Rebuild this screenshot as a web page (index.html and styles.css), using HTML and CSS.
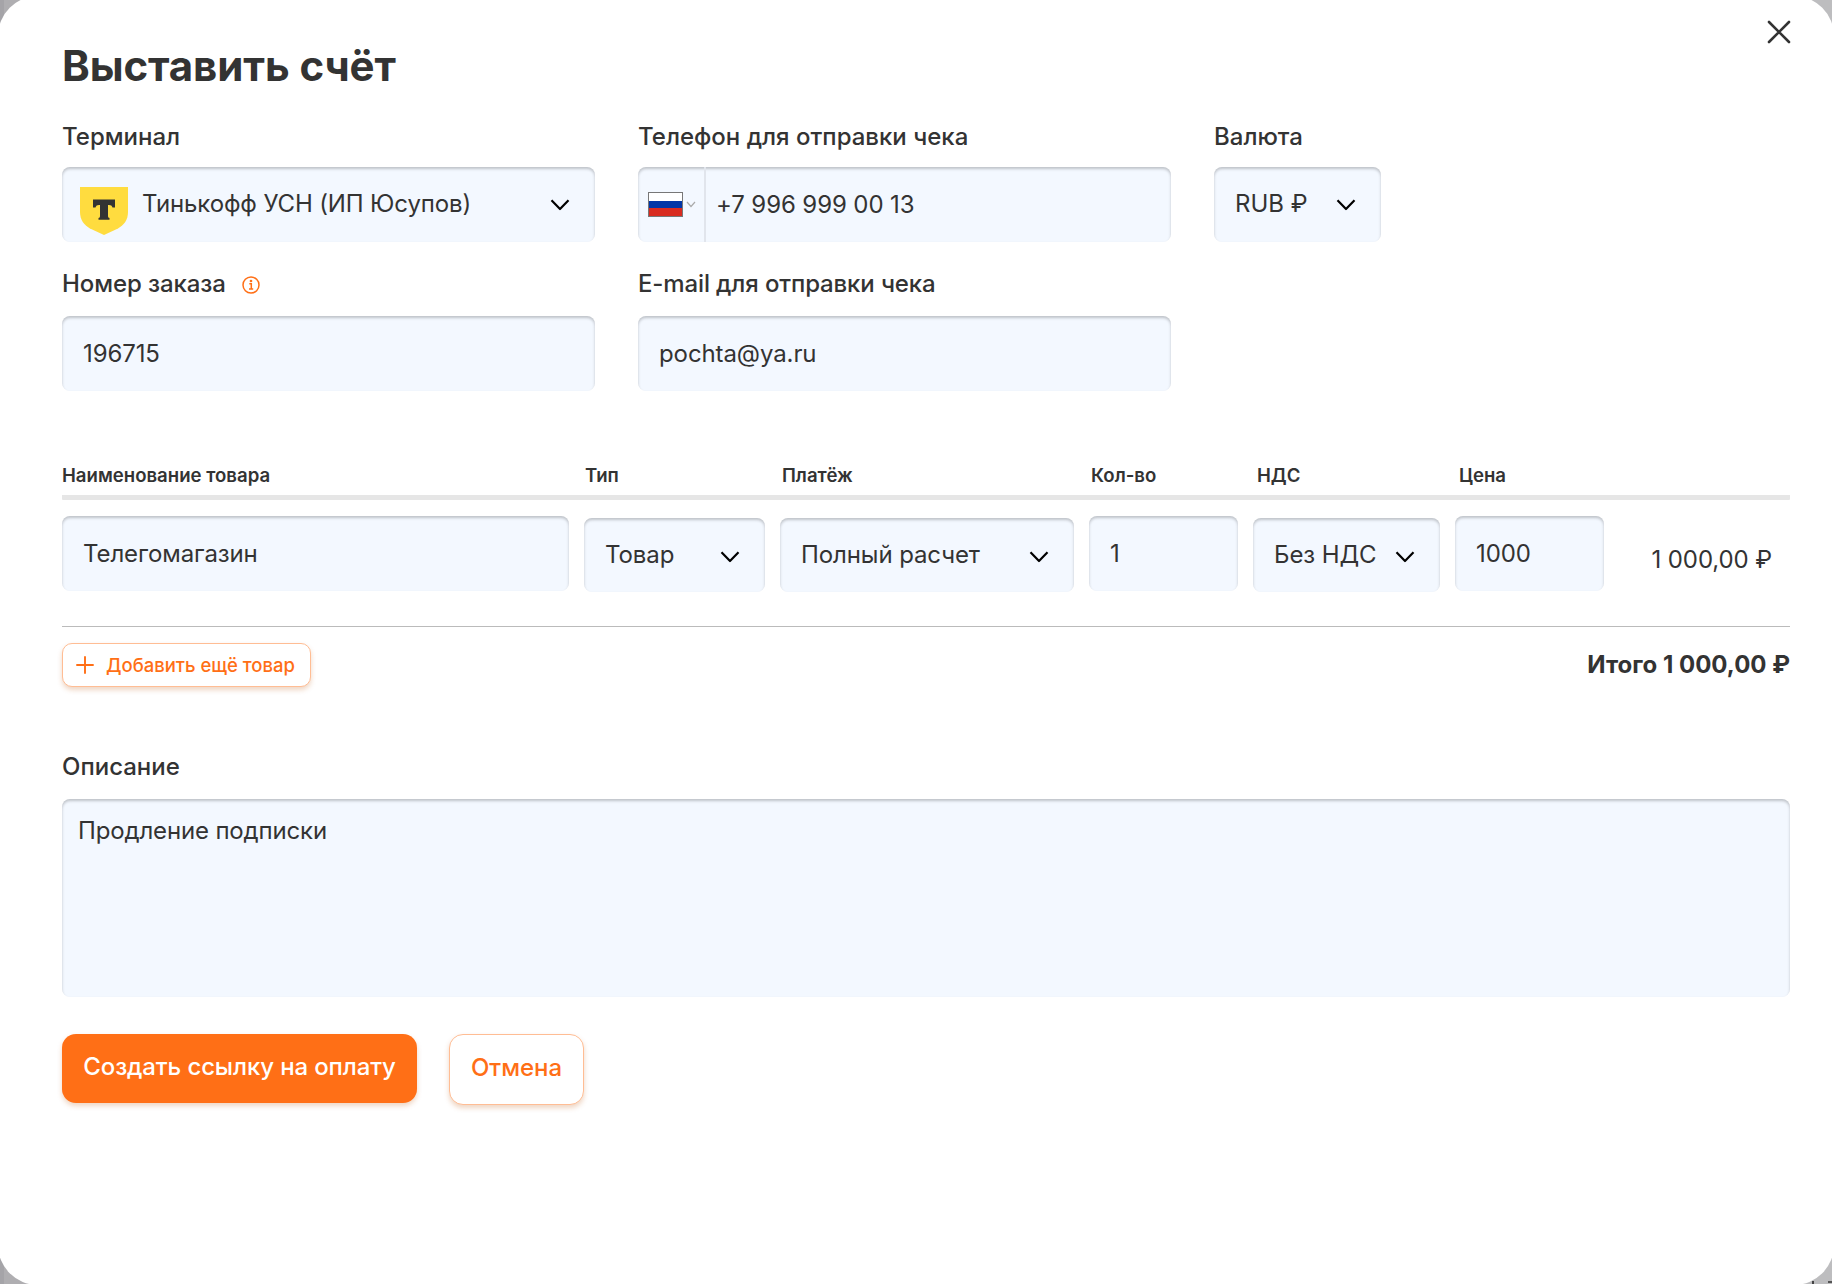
FILE: index.html
```
<!DOCTYPE html>
<html lang="ru">
<head>
<meta charset="utf-8">
<title>Выставить счёт</title>
<link rel="stylesheet" href="styles.css">
</head>
<body>
<svg class="defs" width="0" height="0"><symbol id="chev" viewBox="0 0 20 14"><path d="M1.500 2.200 10 11l8.500-8.800" fill="none" stroke="#000" stroke-width="2.200" stroke-linejoin="round"/></symbol></svg>
<main class="modal">
  <button class="close" aria-label="Закрыть"><svg width="24" height="24" viewBox="0 0 24 24"><path d="M2 2l20 20M22 2L2 22" stroke="#333" stroke-width="2.600" stroke-linecap="round"/></svg></button>
  <h1 class="title">Выставить счёт</h1>
  <section class="fields">
    <div class="group">
      <label class="label">Терминал</label>
      <div class="field terminal">
        <svg class="bank" width="48" height="48" viewBox="0 0 48 48"><path d="M0 0h48v25c0 8-4 13-10 16.500L24 48 10 41.500C4 38 0 33 0 25z" fill="#ffdc3f"/><path d="M13 12.500h22v8h-2.500c-.5-1.700-1.500-2.500-3.500-2.500h-1v11c0 1.300.5 1.800 1.500 2v1.800h-11v-1.800c1-.2 1.500-.7 1.500-2v-11h-1c-2 0-3 .8-3.500 2.500H13z" fill="#333"/></svg>
        <span class="grow">Тинькофф УСН (ИП Юсупов)</span>
        <svg class="chev"><use href="#chev"/></svg>
      </div>
    </div>
    <div class="group">
      <label class="label">Телефон для отправки чека</label>
      <div class="field phone">
        <span class="country"><span class="flag"></span><svg width="10" height="7" viewBox="0 0 10 7"><path d="M1 1l4 4.500L9 1" fill="none" stroke="#aaa" stroke-width="1.200"/></svg></span>
        <span class="number">+7 996 999 00 13</span>
      </div>
    </div>
    <div class="group">
      <label class="label">Валюта</label>
      <div class="field"><span class="grow currency">RUB ₽</span><svg class="chev"><use href="#chev"/></svg></div>
    </div>
    <div class="group second">
      <label class="label">Номер заказа <svg class="info" width="18" height="18" viewBox="0 0 18 18" fill="none" stroke="#ff6f16" stroke-width="1.500"><circle cx="9" cy="9" r="8"/><path d="M7.300 7.700h2v5M7 12.900h4.200"/><circle cx="9" cy="5" r=".6"/></svg></label>
      <div class="field">196715</div>
    </div>
    <div class="group second">
      <label class="label email">E-mail для отправки чека</label>
      <div class="field">pochta@ya.ru</div>
    </div>
  </section>
  <section class="goods">
    <div class="row head"><span>Наименование товара</span><span>Тип</span><span>Платёж</span><span>Кол-во</span><span>НДС</span><span>Цена</span></div>
    <div class="row items">
      <div class="field">Телегомагазин</div>
      <div class="field select"><span class="grow">Товар</span><svg class="chev"><use href="#chev"/></svg></div>
      <div class="field select"><span class="grow">Полный расчет</span><svg class="chev"><use href="#chev"/></svg></div>
      <div class="field">1</div>
      <div class="field select"><span class="grow">Без НДС</span><svg class="chev"><use href="#chev"/></svg></div>
      <div class="field">1000</div>
      <div class="sum">1 000,00 ₽</div>
    </div>
    <div class="totals">
      <button class="btn add"><svg width="18" height="18" viewBox="0 0 18 18"><path d="M9 1v16M1 9h16" stroke="#ff6f16" stroke-width="1.900" stroke-linecap="round"/></svg><span>Добавить ещё товар</span></button>
      <strong class="total">Итого 1 000,00 ₽</strong>
    </div>
  </section>
  <label class="label">Описание</label>
  <div class="field area">Продление подписки</div>
  <div class="actions">
    <button class="btn primary"><span>Создать ссылку на оплату</span></button>
    <button class="btn cancel"><span>Отмена</span></button>
  </div>
</main>
</body>
</html>
```
FILE: styles.css
```
* { box-sizing: border-box; }
body {
  margin: 0;
  height: 1284px;
  overflow: hidden;
  background:
    linear-gradient(#444, #444) 1812px 1281px / 2px 3px no-repeat,
    linear-gradient(#555, #555) 1828px 1281px / 4px 2px no-repeat,
    linear-gradient(90deg, #a5a4a8 0 4px, #afaeb1 4px 50%, #bdbdbf 50%);
  font-family: Inter, "Liberation Sans", sans-serif;
  font-size: 24px;
  color: #333;
}
.defs { position: absolute; }
.modal { position: relative; margin: -4px -2px 0; height: 1289px; padding: 50px 44px 0 64px; background: #fff; border-radius: 40px; }
.close { position: absolute; top: 24px; right: 43px; padding: 0; border: 0; background: none; line-height: 0; }
.title { margin: 0; height: 70px; font-size: 42px; line-height: 39px; font-weight: 700; letter-spacing: -.1px; }
.label { display: flex; align-items: center; height: 51px; padding-bottom: 10px; font-weight: 500; line-height: 30px; }
.fields { display: grid; grid-template-columns: 533px 533px 167px; column-gap: 43px; }
.fields .group { height: 149px; }
.second .label { padding-bottom: 13px; letter-spacing: -.1px; }
.second .email { letter-spacing: -.13px; }
.field { display: flex; align-items: center; height: 75px; padding: 0 20px 0 21px; border-radius: 8px; background: #f3f8ff; box-shadow: inset 0 2px 3px rgba(0,0,0,.22); letter-spacing: -.1px; }
.grow { flex: 1; white-space: nowrap; padding-bottom: 2px; }
.terminal .grow { letter-spacing: -.14px; }
.currency { letter-spacing: 0; }
.chev { width: 20px; height: 14px; flex: none; margin: 1px 5px 0 0; }
.bank { margin: 12px 14px 0 -3px; flex: none; }
.phone { padding: 0; }
.country { display: flex; align-items: center; width: 68px; height: 75px; padding-left: 10px; gap: 3px; border-right: 2px solid #e1e5ec; }
.flag { width: 35px; height: 25px; border: 1px solid #777; background: linear-gradient(#fff 33%, #0036a7 33% 66%, #d82b20 66%); }
.number { padding-left: 10px; }
.info { margin: 1px 0 0 16px; }
.goods { height: 287px; margin-top: 45px; }
.row { display: grid; grid-template-columns: 507px 181px 294px 149px 187px 149px 168px; column-gap: 15px; }
.head { height: 41px; padding-top: 5px; font-size: 18.600px; line-height: 23px; font-weight: 600; border-bottom: 5px solid #e6e6e6; border-radius: 1px; }
.head span:nth-child(2) { padding-left: 1px; }
.head span:nth-child(3), .head span:nth-child(4) { padding-left: 2px; }
.head span:nth-child(n+5) { padding-left: 4px; }
.items { height: 127px; padding-top: 16px; border-bottom: 1px solid #bbb; }
.items .select { height: 74px; margin-top: 2px; }
.items .select .chev { margin-top: 3px; }
.sum { padding: 29px 15px 0 0; text-align: right; white-space: nowrap; letter-spacing: -.1px; }
.totals { display: flex; justify-content: space-between; padding-top: 16px; }
.btn { display: flex; align-items: center; font: 500 24px Inter, sans-serif; border: 1px solid #ffbd94; color: #ff6f16; background: #fff; border-radius: 14px; box-shadow: 0 3px 5px rgba(190,90,20,.25); }
.add { width: 249px; height: 44px; padding: 0 13px; gap: 12px; font-size: 18.500px; border-radius: 10px; white-space: nowrap; }
.add span { padding-bottom: 1px; }
.total { font-weight: 700; line-height: 44px; }
.area { height: 198px; padding: 17px 16px; align-items: flex-start; letter-spacing: -.15px; margin-top: 2px; }
.actions { display: flex; gap: 32px; margin-top: 37px; }
.primary { width: 355px; height: 69px; padding: 0 0 4px; justify-content: center; background: #ff6f16; color: #fff; border: 0; white-space: nowrap; letter-spacing: -.12px; }
.cancel { width: 135px; height: 71px; padding-bottom: 5px; justify-content: center; }
```
